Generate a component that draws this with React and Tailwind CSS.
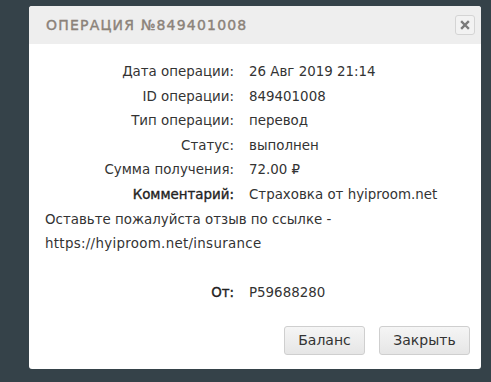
import React from "react";

const rows = [
  ["Дата операции:", "26 Авг 2019 21:14", false],
  ["ID операции:", "849401008", false],
  ["Тип операции:", "перевод", false],
  ["Статус:", "выполнен", false],
  ["Сумма получения:", "72.00 ₽", false],
  ["Комментарий:", "Страховка от hyiproom.net", true],
];

function Row({ label, value, bold }) {
  return (
    <div className="flex h-[24.6px] items-center">
      <div className={`w-[189px] text-right whitespace-nowrap ${bold ? "text-[#222] [-webkit-text-stroke:0.35px_#222]" : ""}`}>{label}</div>
      <div className="ml-[15px] whitespace-nowrap">{value}</div>
    </div>
  );
}

export default function App() {
  return (
    <div className="w-[491px] h-[382px] bg-[#354249] pt-[6px] pl-[29px] overflow-hidden" style={{ fontFamily: '"DejaVu Sans", sans-serif' }}>
      <div className="w-[452px] h-[363px] bg-white rounded-[3px] flex flex-col">
        <div className="h-[38px] bg-[#eeeeee] rounded-t-[3px] flex items-center justify-between pl-[17px] pr-[6px]">
          <div className="text-[14px] tracking-[1.2px] text-[#8b8279] [-webkit-text-stroke:0.4px_#8b8279]">ОПЕРАЦИЯ №849401008</div>
          <div className="w-[20px] h-[20px] border border-[#d4d4d4] rounded-[3px] flex items-center justify-center bg-[#f2f2f2]">
            <svg width="10" height="10" viewBox="0 0 10 10">
              <path d="M2 2 L8 8 M8 2 L2 8" stroke="#7a7a7a" strokeWidth="2.4" strokeLinecap="square" />
            </svg>
          </div>
        </div>
        <div className="pt-[16px] pl-[16px] text-[13.4px] text-[#333] leading-[24.6px]">
          {rows.map(([l, v, b]) => (
            <Row key={l} label={l} value={v} bold={b} />
          ))}
          <div className="h-[24.6px] flex items-center whitespace-nowrap">Оставьте пожалуйста отзыв по ссылке -</div>
          <div className="h-[24.6px] flex items-center whitespace-nowrap tracking-[0.3px]">https://hyiproom.net/insurance</div>
          <div className="h-[24.6px]"></div>
          <Row label="От:" value="P59688280" bold={true} />
        </div>
        <div className="flex justify-end gap-[14px] pr-[11px] mt-[20px]">
          <button className="w-[81px] h-[29px] border border-[#cfcfcf] rounded-[3px] bg-gradient-to-b from-[#f5f5f5] to-[#e6e6e6] text-[14px] text-[#333]">Баланс</button>
          <button className="w-[91px] h-[29px] border border-[#cfcfcf] rounded-[3px] bg-gradient-to-b from-[#f5f5f5] to-[#e6e6e6] text-[14px] text-[#333]">Закрыть</button>
        </div>
      </div>
    </div>
  );
}
